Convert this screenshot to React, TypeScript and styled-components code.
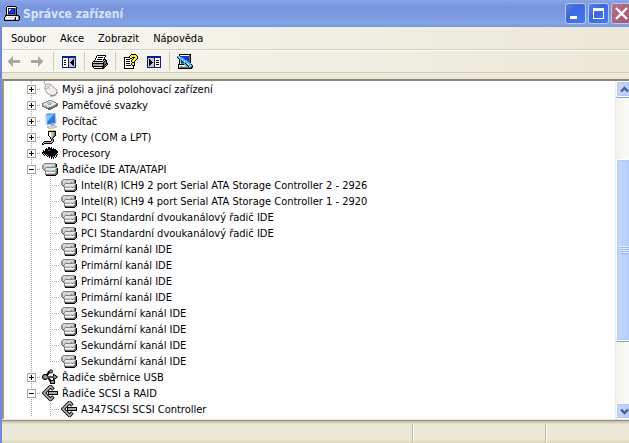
import React from 'react';
import styled, { createGlobalStyle, css } from 'styled-components';

const GlobalStyle = createGlobalStyle`
  * { box-sizing: border-box; }
  body { margin: 0; background: #ece9d8; }
  button { font: inherit; color: inherit; border: 0; padding: 0; margin: 0; background: none; }
`;

/* ---------- icons ---------- */

const palette: Record<string, string> = {
  k: '#000000', w: '#ffffff', l: '#c8c8c8', m: '#a4a4a4', d: '#6e6e6e', g: '#858585',
  G: '#1fa030', b: '#1038d0', n: '#0a1f8c', c: '#38b8f0', y: '#ffee20', o: '#a89000',
  e: '#e6e6e6',
};

const PixelSvg = styled.svg`
  display: block;
  flex: none;
  shape-rendering: crispEdges;
`;

function Pixels({ rows }: { rows: string[] }) {
  const width = Math.max(...rows.map((r) => r.length));
  const runs: React.ReactNode[] = [];
  rows.forEach((row, y) => {
    let x = 0;
    while (x < row.length) {
      const ch = row[x];
      let end = x + 1;
      while (end < row.length && row[end] === ch) end += 1;
      if (palette[ch]) runs.push(<rect key={`${x}-${y}`} x={x} y={y} width={end - x} height={1} fill={palette[ch]} />);
      x = end;
    }
  });
  return (
    <PixelSvg width={width} height={rows.length} viewBox={`0 0 ${width} ${rows.length}`} aria-hidden="true">
      {runs}
    </PixelSvg>
  );
}

const computerRows = [
  '...kkkkkkkkk....',
  '..kwwwwwwwwlk...',
  '..kwnnnnnnndk...',
  '..kwnwwbbbndk...',
  '..kwnwbbbbndk...',
  '..kwnbbbbbndk...',
  '..kwnbbbbbndk...',
  '..kwnnnnnnndk...',
  '..klddddddddk...',
  '.kkkkkkkkkkkkkk.',
  '.kwwwwwwwwwwlldk',
  'kwlwlwlwlwlkwwdk',
  'kwwwwwwwwwlkwlmk',
  'kllllllllldkwlmk',
  'kkkkkkkkkkkkkkk.',
];

const treePanelRows = [
  'nnnnnnnnnnnnnn',
  'nnnnnnnnnnnnnn',
  'nwwwwwnlllllln',
  'nwwwwwnllllkln',
  'nwkkwwnlllkkln',
  'nwwwwwnllkkkln',
  'nwkkwwnlkkkkln',
  'nwwwwwnllkkkln',
  'nwkkwwnlllkkln',
  'nwwwwwnllllkln',
  'nwwwwwnlllllln',
  'nnnnnnnnnnnnnn',
];

const actionPanelRows = [
  'nnnnnnnnnnnnnn',
  'nnnnnnnnnnnnnn',
  'nllllllnwwwwwn',
  'nlkllllnwwwwwn',
  'nlkklllnwkkkwn',
  'nlkkkllnwwwwwn',
  'nlkkkklnwkkkwn',
  'nlkkkllnwwwwwn',
  'nlkklllnwkkkwn',
  'nlkllllnwwwwwn',
  'nllllllnwwwwwn',
  'nnnnnnnnnnnnnn',
];

const printerRows = [
  '.....kkkkkkkkk..',
  '....kwwwwwwwwk..',
  '....kwkkkkkwk...',
  '...kwwwwwwwwk...',
  '...kwkkkkkwkkk..',
  '..kwwwwwwwwklkk.',
  '.kkkkkkkkkklkdk.',
  'kllllllllllkddk.',
  'kkkkkkkkkkkkddkk',
  'kmmmmmmmmmmkdkdk',
  'kmmmmmmyymmkkdk.',
  'kkkkkkkkkkkkdk..',
  '.kwwwwwwwwkkk...',
  '..kkkkkkkkkk....',
];

const helpRows = [
  '.......kkkkk..',
  '......kyyyyyk.',
  '.....kyyyyyyyk',
  'kkkkkkyykkkyyk',
  'kwwwwwkkwkyyyk',
  'kwkkkkwwkyyyk.',
  'kwwwwwwkyyyk..',
  'kwkkkkwkyyk...',
  'kwwwwwwwkkk...',
  'kwkkkkwkyyk...',
  'kwwwwwwkyyk...',
  'kwkkkkkwkkk...',
  'kwwwwwwwwk....',
  'kwwwwwwwwk....',
  'kkkkkkkkkk....',
];

const scanRows = [
  '..kkkkkkkkkkkk..',
  '..kwwwwwwwwwdk..',
  'cccbbbbbbbbbdk..',
  'kcwccbbbbbbbdk..',
  '.kcccccbbbbbdk..',
  '..kccwccbbbbdk..',
  '..klkcccccbbdk..',
  '..klbbcwcccbdk..',
  '..klbbbcccccdk..',
  '..kldddckcwccc..',
  '.kkkkkkcckcwcck.',
  '.kwwwwwwcckccwck',
  '.kwlGllllccklcdk',
  '.kddddddddddddkk',
  '.kkkkkkkkkkkkkk.',
];

const driveRows = [
  '..gggggggggggg..',
  '.gllllllllllldk.',
  'gmeeeeeeeeeemdk.',
  'gmllllllllGlmdk.',
  'gmllggggggggggg.',
  'gmlgeeeeeeeeeemk',
  '.dgleeeeeeeeemdk',
  '..dglllllllllmdk',
  '...gmmmmmmmGmmdk',
  '...gwwwwwwwwwmdk',
  '...glllllllllddk',
  '...dddddddddddk.',
  '....kkkkkkkkkk..',
];

const memoryRows = [
  '......gggg......',
  '....ggeeeegg....',
  '..ggeemmmeeegg..',
  'ggeeemlllmeeeegg',
  'gleeeemmmeeeemdd',
  'gmlleeeeeeemmddd',
  'gdmmmleeemmdddd.',
  '..ddmmmddGddd...',
  '....ddddddd.....',
  '......ddd.......',
];

const cpuRows = [
  '......kk.k......',
  '....k.kkkk.k....',
  '...kkkkkkkkkkk..',
  '.k.kkkddkkkkkkk.',
  '.kkkkkkkkkkkkkkk',
  'kkkkkkkkkkkkkkkk',
  'kmkkkkkkkkkkkkk.',
  '.kmkmkkkkkkkkkmk',
  '..k.kmkkkkkkkmk.',
  '.....kmkmkkmk.k.',
  '.......k.kmk.k..',
  '.........k.k....',
];

const portRows = [
  '......yyoyyoyy..',
  '......kkkkkkkk..',
  '......kwwllmdk..',
  '......kwwllmdk..',
  '......kwwllmdk..',
  '......kwwllmdk..',
  '.......kwlmdk...',
  '........klmk....',
  '........kmk.....',
  '.........kmk....',
  '.........kmk....',
  '..kkkkkkkmmk....',
  '.kmmmmmmmmk.....',
  'kmkkkkkkkk......',
  'kk..............',
];

function MouseIcon() {
  return (
    <svg width="16" height="16" viewBox="0 0 16 16" aria-hidden="true">
      <path d="M5 5 Q0 1 3 0" fill="none" stroke="#999" />
      <path d="M3 5 Q4 2 8 3 L14 8 Q17 12 13 14 Q9 16 5 12 Q2 9 3 5Z" fill="#f1efee" stroke="#a09c9a" />
      <path d="M3 8 Q7 8 8 3 M5 5 L8 8" fill="none" stroke="#b5b0ae" />
      <path d="M8 15 Q14 16 15 11" fill="none" stroke="#77726f" />
    </svg>
  );
}

function MonitorIcon() {
  return (
    <svg width="16" height="16" viewBox="0 0 16 16" aria-hidden="true">
      <path d="M4 1 L13 0 L14 10 L5 12Z" fill="#2c7be0" stroke="#a8c4ea" />
      <path d="M5 2 L12 1 L5 9Z" fill="#77c2ff" />
      <path d="M2 2 L4 1 L5 12 L3 11Z" fill="#dce6f4" />
      <path d="M9 11 L12 11 L13 13 L9 14Z" fill="#9aa6b8" />
      <path d="M5 14 L12 12 L15 14 L8 16Z" fill="#d3d6dc" stroke="#9aa1ad" strokeWidth="0.6" />
    </svg>
  );
}

function UsbIcon() {
  return (
    <svg width="16" height="16" viewBox="0 0 16 16" aria-hidden="true">
      <path d="M3 8 H12 M4 8 L7 3 H9 M6 8 L9 13 H11" fill="none" stroke="#000" strokeWidth="2.2" />
      <circle cx="3" cy="8" r="2.6" fill="#888" stroke="#000" />
      <circle cx="9" cy="2.5" r="1.6" fill="#999" stroke="#000" />
      <rect x="8.5" y="11.5" width="4" height="3" fill="#999" stroke="#000" />
      <path d="M11.5 5 L15.5 8 L11.5 11Z" fill="#888" stroke="#000" />
      <path d="M3 8 H13" stroke="#a8a8a8" />
    </svg>
  );
}

function ScsiIcon() {
  return (
    <svg width="16" height="16" viewBox="0 0 16 16" aria-hidden="true">
      <path d="M11.5 4.5 L8.5 1.5 L2 8 L8.5 14.5 L11.5 11.5" fill="none" stroke="#111" strokeWidth="3.6" />
      <path d="M11 4 L8.5 1.5 L2 8 L8.5 14.5 L11 12" fill="none" stroke="#b4b4b4" strokeWidth="1.6" />
      <rect x="6.5" y="6.5" width="9" height="3" fill="#a8a8a8" stroke="#000" />
    </svg>
  );
}

function ArrowIcon({ forward = false }: { forward?: boolean }) {
  const d = forward ? 'M0 4 H7 V0 L12 5 V6 L7 11 V7 H0Z' : 'M12 4 H5 V0 L0 5 V6 L5 11 V7 H12Z';
  return (
    <svg width="13" height="12" viewBox="0 0 13 12" aria-hidden="true">
      <path d={d} transform="translate(1 1)" fill="#fff" />
      <path d={d} fill="#aca899" />
    </svg>
  );
}

function ChevronIcon({ down = false }: { down?: boolean }) {
  return (
    <svg width="9" height="7" viewBox="0 0 9 7" aria-hidden="true">
      <path d={down ? 'M1 1.5 L4.5 5 L8 1.5' : 'M1 5.5 L4.5 2 L8 5.5'} fill="none" stroke="#4d6185" strokeWidth="2.4" />
    </svg>
  );
}

/* ---------- window frame ---------- */

const Window = styled.div`
  display: flex;
  flex-direction: column;
  height: 100vh;
  overflow: hidden;
  background: #ece9d8;
  color: #000;
  font: 11px/16px 'DejaVu Sans Condensed', 'DejaVu Sans', sans-serif;
  cursor: default;
`;

const TitleBar = styled.header`
  display: flex;
  align-items: center;
  flex: none;
  height: 27px;
  padding-left: 4px;
  background: linear-gradient(#8ba6e6 0, #7f9ce2 3px, #7893dd 7px, #7b99e1 16px, #82a5e4 23px, #7a96df 27px);
`;

const Title = styled.h1`
  flex: 1;
  margin: 0;
  padding-left: 3px;
  color: #d8e4f8;
  font-size: 12px;
  font-weight: bold;
  white-space: nowrap;
`;

const CaptionButtons = styled.div`
  display: flex;
  gap: 2px;
  margin-right: -3px;
`;

const CaptionButton = styled.button<{ $close?: boolean }>`
  display: grid;
  place-items: center;
  width: 21px;
  height: 21px;
  border: 1px solid #b4c8f2;
  border-radius: 3px;
  background: ${(p) => (p.$close
    ? 'linear-gradient(135deg, #b8707f, #ad6079 60%, #a85a78)'
    : 'linear-gradient(135deg, #5c80e4, #3c66dc 40%, #4a7bf0)')};
`;

const Client = styled.div`
  display: flex;
  flex-direction: column;
  flex: 1;
  min-height: 0;
  border-left: 2px solid #7288dc;
`;

const barFill = css`
  background: linear-gradient(90deg, #f8f7f3, #f1efe4 50%, #ebe8d7);
`;

const MenuBar = styled.nav`
  ${barFill}
  display: flex;
  flex: none;
  height: 23px;
  padding-left: 2px;
  border-bottom: 1px solid #d6d1bd;
`;

const MenuItem = styled.button`
  padding: 2px 7px 0;
`;

const Toolbar = styled.div`
  ${barFill}
  display: flex;
  flex: none;
  align-items: center;
  height: 23px;
  padding-left: 1px;
  border-top: 1px solid #fff;
  border-bottom: 1px solid #d0ccb9;
`;

const ToolButton = styled.button`
  display: grid;
  place-items: center;
  width: 23px;
  height: 21px;
`;

const ToolSeparator = styled.span`
  width: 1px;
  height: 19px;
  margin: 0 3px 0 4px;
  background: #cfcbb8;
`;

/* ---------- device tree ---------- */

const Panel = styled.main`
  display: flex;
  flex: 1;
  min-height: 0;
  margin-top: 6px;
  border: solid #716f64;
  border-width: 2px 0 0 2px;
  border-top-color: #8a8777;
  border-left-color: #9b988a;
  background: #fff;
  overflow: hidden;
`;

const Tree = styled.ul`
  flex: 1;
  min-width: 0;
  margin: 0;
  padding: 0 0 0 18px;
  list-style: none;
  overflow: hidden;
`;

const Row = styled.li`
  display: flex;
  align-items: center;
  height: 16px;
  white-space: nowrap;
`;

const Label = styled.span`
  padding-top: 2px;
`;

const dotsDown = 'repeating-linear-gradient(180deg, #aca899 0 1px, transparent 1px 2px)';
const dotsAcross = 'repeating-linear-gradient(90deg, #aca899 0 1px, transparent 1px 2px)';

const Branch = styled.span<{ $tee?: boolean; $last?: boolean }>`
  display: grid;
  place-items: center;
  flex: none;
  width: 19px;
  height: 16px;
  background-image: ${dotsDown}, ${(p) => (p.$tee ? dotsAcross : 'none')};
  background-repeat: no-repeat;
  background-position: 9px 0, 9px 8px;
  background-size: 1px ${(p) => (p.$last ? 9 : 16)}px, 10px 1px;
`;

const Expander = styled.button`
  display: grid;
  place-items: center;
  width: 9px;
  height: 9px;
  border: 1px solid #aca899;
  background: #fff;
`;

const IconSlot = styled.span`
  display: grid;
  place-items: center;
  flex: none;
  width: 16px;
  height: 16px;
  margin: 0 4px 0 1px;
`;

/* ---------- scroll bar ---------- */

const ScrollBar = styled.div`
  display: flex;
  flex-direction: column;
  flex: none;
  width: 17px;
  margin-right: -3px;
  border-left: 1px solid #eeede5;
  background: linear-gradient(90deg, #f3f1ec, #fefefb);
`;

const scrollFace = css`
  border: 1px solid #fff;
  border-radius: 2px;
  background: linear-gradient(90deg, #c8d6fb, #b9cffb 70%, #aec8f7);
  box-shadow: inset 0 0 0 1px #b4c8f6, 0 1px 0 #7ea2dc;
`;

const ScrollButton = styled.button`
  ${scrollFace}
  display: grid;
  place-items: center;
  flex: none;
  width: 100%;
  height: 16px;
`;

const ScrollSpace = styled.div`
  flex: 62;
`;

const Thumb = styled.div`
  ${scrollFace}
  display: grid;
  place-items: center;
  flex: 181;
`;

const Grip = styled.span`
  width: 7px;
  height: 8px;
  background: repeating-linear-gradient(#eef4fe 0 1px, #8cb0f8 1px 2px);
`;

/* ---------- status bar ---------- */

const StatusBar = styled.footer`
  display: flex;
  flex: none;
  height: 24px;
  padding-top: 4px;
  border-top: 1px solid #f0eee6;
  background: linear-gradient(#8f8c7e 0 1px, #c5c2b2 1px 2px, #dedbca 3px, #ebe8d7 5px, #ebe8d7 19px, #d9d6bb);
`;

const StatusCell = styled.div<{ $width?: number }>`
  flex: ${(p) => (p.$width ? `0 0 ${p.$width}px` : '1')};
  height: 18px;
  & + & {
    border-left: 1px solid #bab7a4;
    box-shadow: inset 1px 0 #fff;
  }
`;

/* ---------- data ---------- */

type Kind = 'mouse' | 'memory' | 'computer' | 'port' | 'cpu' | 'drive' | 'usb' | 'scsi';
type Device = { label: string; kind: Kind; state?: 'open' | 'closed'; child?: boolean; last?: boolean };

const icons: Record<Kind, React.ReactNode> = {
  mouse: <MouseIcon />,
  memory: <Pixels rows={memoryRows} />,
  computer: <MonitorIcon />,
  port: <Pixels rows={portRows} />,
  cpu: <Pixels rows={cpuRows} />,
  drive: <Pixels rows={driveRows} />,
  usb: <UsbIcon />,
  scsi: <ScsiIcon />,
};

const drive = (label: string, last = false): Device => ({ label, kind: 'drive', child: true, last });

const devices: Device[] = [
  { label: 'Myši a jiná polohovací zařízení', kind: 'mouse', state: 'closed' },
  { label: 'Paměťové svazky', kind: 'memory', state: 'closed' },
  { label: 'Počítač', kind: 'computer', state: 'closed' },
  { label: 'Porty (COM a LPT)', kind: 'port', state: 'closed' },
  { label: 'Procesory', kind: 'cpu', state: 'closed' },
  { label: 'Řadiče IDE ATA/ATAPI', kind: 'drive', state: 'open' },
  drive('Intel(R) ICH9 2 port Serial ATA Storage Controller 2 - 2926'),
  drive('Intel(R) ICH9 4 port Serial ATA Storage Controller 1 - 2920'),
  drive('PCI Standardní dvoukanálový řadič IDE'),
  drive('PCI Standardní dvoukanálový řadič IDE'),
  drive('Primární kanál IDE'),
  drive('Primární kanál IDE'),
  drive('Primární kanál IDE'),
  drive('Primární kanál IDE'),
  drive('Sekundární kanál IDE'),
  drive('Sekundární kanál IDE'),
  drive('Sekundární kanál IDE'),
  drive('Sekundární kanál IDE', true),
  { label: 'Řadiče sběrnice USB', kind: 'usb', state: 'closed' },
  { label: 'Řadiče SCSI a RAID', kind: 'scsi', state: 'open' },
  { label: 'A347SCSI SCSI Controller', kind: 'scsi', child: true },
];

function DeviceRow({ device }: { device: Device }) {
  const { label, kind, state, child, last } = device;
  return (
    <Row role="treeitem" aria-level={child ? 2 : 1} aria-expanded={state ? state === 'open' : undefined}>
      <Branch $tee={!child}>
        {state && (
          <Expander aria-label={label}>
            <PixelSvg width="5" height="5" viewBox="0 0 5 5" aria-hidden="true">
              <path d={state === 'open' ? 'M0 2h5v1h-5z' : 'M0 2h5v1h-5zM2 0h1v5h-1z'} fill="#000" />
            </PixelSvg>
          </Expander>
        )}
      </Branch>
      {child && <Branch $tee $last={last} />}
      <IconSlot>{icons[kind]}</IconSlot>
      <Label>{label}</Label>
    </Row>
  );
}

export default function App() {
  return (
    <>
      <GlobalStyle />
      <Window>
        <TitleBar>
          <Pixels rows={computerRows} />
          <Title>Správce zařízení</Title>
          <CaptionButtons>
            <CaptionButton aria-label="Minimalizovat">
              <PixelSvg width="13" height="13" viewBox="0 0 13 13"><path d="M1 9h7v3h-7z" fill="#fff" /></PixelSvg>
            </CaptionButton>
            <CaptionButton aria-label="Maximalizovat">
              <PixelSvg width="11" height="11" viewBox="0 0 11 11">
                <path d="M0 0h11v11h-11zM1 3v7h9v-7z" fill="#fff" fillRule="evenodd" />
              </PixelSvg>
            </CaptionButton>
            <CaptionButton $close aria-label="Zavřít">
              <svg width="13" height="13" viewBox="0 0 13 13"><path d="M1 1l11 11M12 1l-11 11" stroke="#fff" strokeWidth="2.4" /></svg>
            </CaptionButton>
          </CaptionButtons>
        </TitleBar>
        <Client>
          <MenuBar>
            <MenuItem>Soubor</MenuItem>
            <MenuItem>Akce</MenuItem>
            <MenuItem>Zobrazit</MenuItem>
            <MenuItem>Nápověda</MenuItem>
          </MenuBar>
          <Toolbar role="toolbar">
            <ToolButton aria-label="Zpět"><ArrowIcon /></ToolButton>
            <ToolButton aria-label="Vpřed"><ArrowIcon forward /></ToolButton>
            <ToolSeparator />
            <ToolButton aria-label="Strom konzoly"><Pixels rows={treePanelRows} /></ToolButton>
            <ToolSeparator />
            <ToolButton aria-label="Tisk"><Pixels rows={printerRows} /></ToolButton>
            <ToolSeparator />
            <ToolButton aria-label="Nápověda"><Pixels rows={helpRows} /></ToolButton>
            <ToolButton aria-label="Podokno akcí"><Pixels rows={actionPanelRows} /></ToolButton>
            <ToolSeparator />
            <ToolButton aria-label="Vyhledat změny hardwaru"><Pixels rows={scanRows} /></ToolButton>
          </Toolbar>
          <Panel>
            <Tree role="tree">
              {devices.map((device, i) => <DeviceRow key={i} device={device} />)}
            </Tree>
            <ScrollBar>
              <ScrollButton aria-label="Nahoru"><ChevronIcon /></ScrollButton>
              <ScrollSpace />
              <Thumb><Grip /></Thumb>
              <ScrollSpace />
              <ScrollButton aria-label="Dolů"><ChevronIcon down /></ScrollButton>
            </ScrollBar>
          </Panel>
          <StatusBar>
            <StatusCell />
            <StatusCell $width={133} />
            <StatusCell $width={84} />
          </StatusBar>
        </Client>
      </Window>
    </>
  );
}
